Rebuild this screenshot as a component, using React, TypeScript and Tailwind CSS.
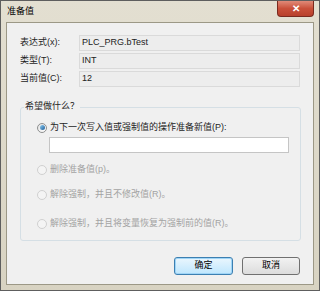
const font = "font-['Liberation_Sans','Noto_Sans_CJK_SC',sans-serif]";

function Radio({ checked, disabled }: { checked?: boolean; disabled?: boolean }) {
  return (
    <span
      className={
        "grid h-[10px] w-[10px] shrink-0 place-items-center rounded-full border " +
        (disabled ? "border-[#d0d0d0] bg-[#f4f4f4]" : "border-[#8e8f8f] bg-gradient-to-br from-[#e2e2e2] to-white")
      }
    >
      {checked && (
        <span className="h-[5px] w-[5px] rounded-full bg-gradient-to-br from-[#8ccdf3] to-[#1f5e99]" />
      )}
    </span>
  );
}

function Field({ label, value }: { label: string; value: string }) {
  return (
    <div className="flex h-[16px] items-center">
      <span className="w-[59px] text-[9px] text-[#1e1e1e]">{label}</span>
      <div className="flex h-full w-[221px] items-center border border-[#dadada] bg-[#ededed] px-[2px] text-[9px] text-[#222]">
        {value}
      </div>
    </div>
  );
}

export default function App() {
  return (
    <div className={"relative flex h-[291px] w-[320px] flex-col border border-[#5e5e5e] bg-gradient-to-b from-[#e3dfd1] to-[#d8d3c2] " + font}>
      {/* title bar */}
      <div className="flex h-[21px] items-center pl-[6px] text-[9px] text-black">准备值</div>
      <div className="absolute right-[5px] top-0 grid h-[16px] w-[37px] place-items-center rounded-b-[4px] border border-t-0 border-[#7a2a1f] bg-gradient-to-b from-[#e08a78] via-[#c9503a] to-[#b8402c] text-[10px] font-bold leading-none text-white">
        ✕
      </div>

      {/* client */}
      <div className="mx-[5px] mb-[5px] flex flex-1 flex-col border border-[#9c9886] bg-[#f0f0f0] px-[13px]">
        <div className="mt-[12px] flex flex-col gap-[2px]">
          <Field label="表达式(x):" value="PLC_PRG.bTest" />
          <Field label="类型(T):" value="INT" />
          <Field label="当前值(C):" value="12" />
        </div>

        <div className="relative mt-[20px] h-[134px] w-[281px] rounded-[3px] border border-[#d5dfe5]">
          <span className="absolute left-[3px] top-[-8px] bg-[#f0f0f0] px-[1px] text-[9px] leading-[13px] text-[#1e1e1e]">希望做什么？</span>
          <div className="flex h-[13px] items-center gap-[3px] pl-[16px] mt-[13px] text-[9px] text-[#1e1e1e]">
            <Radio checked />
            <span>为下一次写入值或强制值的操作准备新值(P):</span>
          </div>
          <div className="ml-[28px] mt-[3px] h-[16px] w-[240px] border border-[#c5c5c5] bg-white" />
          <div className="mt-[10px] flex h-[13px] items-center gap-[3px] pl-[16px] text-[9px] text-[#a3a3a3]">
            <Radio disabled />
            <span>删除准备值(p)。</span>
          </div>
          <div className="mt-[12px] flex h-[13px] items-center gap-[3px] pl-[16px] text-[9px] text-[#a3a3a3]">
            <Radio disabled />
            <span>解除强制，并且不修改值(R)。</span>
          </div>
          <div className="mt-[16px] flex h-[13px] items-center gap-[3px] pl-[16px] text-[9px] text-[#a3a3a3]">
            <Radio disabled />
            <span>解除强制，并且将变量恢复为强制前的值(R)。</span>
          </div>
        </div>

        <div className="mt-[16px] flex justify-end gap-[9px]">
          <button className="h-[18px] w-[59px] rounded-[3px] border border-[#3c7fb1] bg-gradient-to-b from-[#eaf6fd] to-[#bee6fd] text-[9px] text-black shadow-[inset_0_0_0_1px_#9fd5f7]">
            确定
          </button>
          <button className="h-[18px] w-[58px] rounded-[3px] border border-[#707070] bg-gradient-to-b from-[#f2f2f2] to-[#dcdcdc] text-[9px] text-black">
            取消
          </button>
        </div>
      </div>
    </div>
  );
}
